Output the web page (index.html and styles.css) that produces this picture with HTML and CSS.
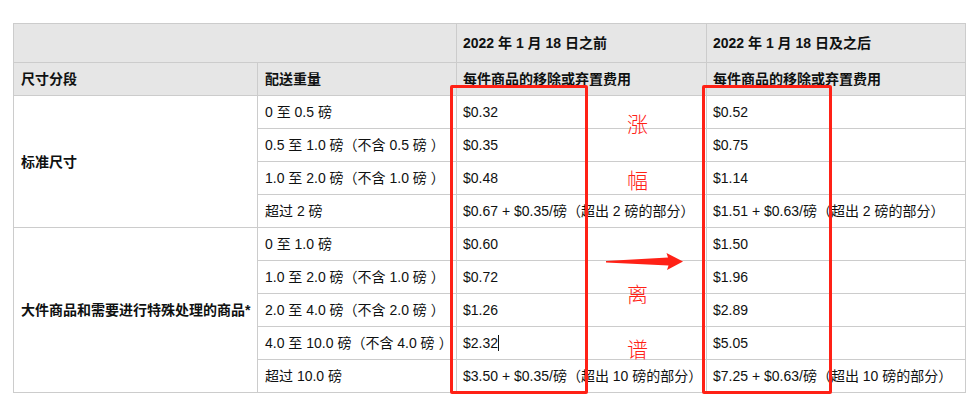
FILE: index.html
```html
<!DOCTYPE html>
<html lang="zh-CN">
<head>
<meta charset="utf-8">
<title>移除或弃置费用</title>
<link rel="stylesheet" href="styles.css">
</head>
<body>
<div class="page">
  <table class="fees">
    <colgroup>
      <col class="c1"><col class="c2"><col class="c3"><col class="c4">
    </colgroup>
    <thead>
      <tr class="h1">
        <th colspan="2"></th>
        <th class="fee">2022 年 1 月 18 日之前</th>
        <th class="fee">2022 年 1 月 18 日及之后</th>
      </tr>
      <tr class="h2">
        <th>尺寸分段</th>
        <th>配送重量</th>
        <th class="fee">每件商品的移除或弃置费用</th>
        <th class="fee">每件商品的移除或弃置费用</th>
      </tr>
    </thead>
    <tbody>
      <tr><td rowspan="4" class="tier">标准尺寸</td><td>0 至 0.5 磅</td><td class="fee">$0.32</td><td class="fee">$0.52</td></tr>
      <tr><td>0.5 至 1.0 磅（不含 0.5 磅<span class="rp">）</span></td><td class="fee">$0.35</td><td class="fee">$0.75</td></tr>
      <tr><td>1.0 至 2.0 磅（不含 1.0 磅<span class="rp">）</span></td><td class="fee">$0.48</td><td class="fee">$1.14</td></tr>
      <tr><td>超过 2 磅</td><td class="fee">$0.67 + $0.35/磅（超出 2 磅的部分）</td><td class="fee">$1.51 + $0.63/磅（超出 2 磅的部分）</td></tr>
      <tr><td rowspan="6" class="tier">大件商品和需要进行特殊处理的商品*</td><td>0 至 1.0 磅</td><td class="fee">$0.60</td><td class="fee">$1.50</td></tr>
      <tr><td>1.0 至 2.0 磅（不含 1.0 磅<span class="rp">）</span></td><td class="fee">$0.72</td><td class="fee">$1.96</td></tr>
      <tr><td>2.0 至 4.0 磅（不含 2.0 磅<span class="rp">）</span></td><td class="fee">$1.26</td><td class="fee">$2.89</td></tr>
      <tr><td>4.0 至 10.0 磅（不含 4.0 磅<span class="rp">）</span></td><td class="fee"><span class="caret">$2.32</span></td><td class="fee">$5.05</td></tr>
      <tr><td>超过 10.0 磅</td><td class="fee">$3.50 + $0.35/磅（超出 10 磅的部分）</td><td class="fee">$7.25 + $0.63/磅（超出 10 磅的部分）</td></tr>
    </tbody>
  </table>

  <div class="mark box-before"></div>
  <div class="mark box-after"></div>
  <span class="note n1">涨</span>
  <span class="note n2">幅</span>
  <span class="note n3">离</span>
  <span class="note n4">谱</span>
  <svg class="arrow" width="80" height="20" viewBox="604 252 80 20" aria-hidden="true">
    <path d="M606 261 L668 257.5 L666.5 253 L683 261.5 L667 270 L668.5 265.5 L606 262.5 Z" fill="#ff2116"/>
  </svg>
</div>
</body>
</html>
```
FILE: styles.css
```css
html, body {
  margin: 0;
  padding: 0;
  background: #ffffff;
}

.page {
  position: relative;
  width: 972px;
  height: 399px;
  padding: 23px 0 0 13px;
  box-sizing: border-box;
  font-family: "Liberation Sans", Arial, "Noto Sans CJK SC", sans-serif;
  font-size: 14px;
  color: #0f1111;
}

.fees {
  border-collapse: collapse;
  table-layout: fixed;
  width: 952px;
}

.fees col.c1 { width: 244px; }
.fees col.c2 { width: 199px; }
.fees col.c3 { width: 250px; }
.fees col.c4 { width: 259px; }

.fees th,
.fees td {
  border: 1px solid #cccccc;
  padding: 0 7px;
  text-align: left;
  vertical-align: middle;
  white-space: nowrap;
  line-height: 18px;
}

.fees th.fee,
.fees td.fee {
  padding-left: 6px;
}

.fees thead th {
  background: #e6e6e6;
  font-weight: bold;
}

.fees tr.h1 { height: 39px; }
.fees tr.h2 { height: 33px; }
.fees tbody tr { height: 33px; }

.fees td.tier {
  font-weight: bold;
}

/* closing full-width parenthesis sits a little further out in the weight column */
.rp {
  padding-left: 4px;
}

.caret {
  border-right: 1px solid #0f1111;
}

.mark {
  position: absolute;
  top: 85px;
  height: 309px;
  border: 3px solid #ff2116;
  box-sizing: border-box;
  border-radius: 2px;
}

.box-before {
  left: 450px;
  width: 138px;
}

.box-after {
  left: 702px;
  width: 130px;
}

.note {
  position: absolute;
  left: 627px;
  font-family: "Noto Sans CJK SC", sans-serif;
  font-weight: 300;
  font-size: 21px;
  line-height: 21px;
  color: #ff2116;
}

.n1 { top: 113px; }
.n2 { top: 169px; }
.n3 { top: 283px; }
.n4 { top: 338px; }

.arrow {
  position: absolute;
  left: 604px;
  top: 252px;
}
```
